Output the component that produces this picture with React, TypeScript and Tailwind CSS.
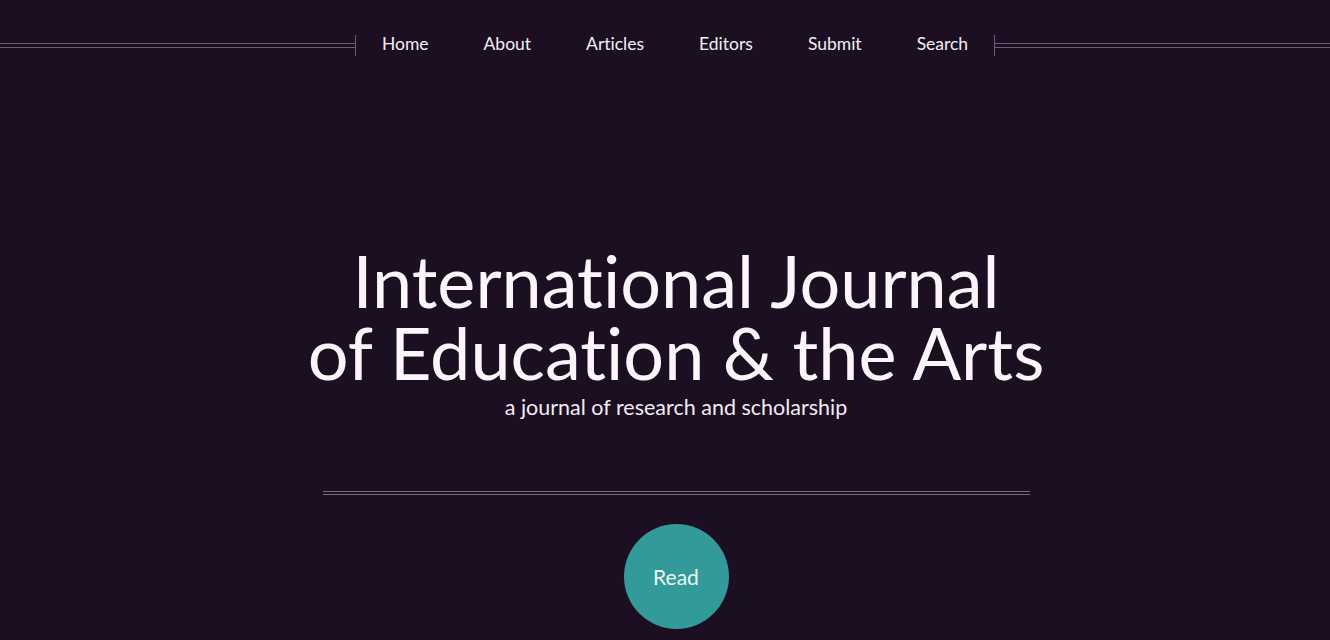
import React from 'react';

const links = ['Home', 'About', 'Articles', 'Editors', 'Submit', 'Search'];

const App = () => (
  <div className="min-h-[640px] w-full bg-[#1d0f22] text-white font-['Lato',sans-serif] [font-variant-ligatures:none] overflow-hidden">
    <header className="flex items-center pt-[35px]">
      <div className="flex-[1_1_20px] h-[5px] border-y border-[#6e5c76]" />
      <nav className="flex h-[21px] items-center border-x border-[#6e5c76] px-[26px] pb-[4px] gap-[55px] text-[17.5px] leading-none text-[#f3eef3]">
        {links.map((l) => (
          <a key={l} href="#" className="hover:text-[#339a9a]">
            {l}
          </a>
        ))}
      </nav>
      <div className="flex-[1_1_0px] h-[5px] border-y border-[#6e5c76]" />
    </header>

    <section className="flex flex-col items-center pt-[188px] pl-[22px]">
      <h1 className="text-center text-[72px] leading-[72px] font-normal text-[#fbf6fb]">
        International Journal
        <br />
        of Education &amp; the Arts
      </h1>
      <p className="mt-[5px] text-[21.5px] leading-[28px] text-[#f1ecf1]">a journal of research and scholarship</p>
      <div className="mt-[70px] w-[707px] h-[4px] border-y border-[#7a6a80]" />
      <button className="mt-[29px] w-[105px] h-[105px] rounded-full bg-[#339a9a] text-[21px] text-[#eef7f7] flex items-center justify-center">
        Read
      </button>
    </section>
  </div>
);

export default App;
